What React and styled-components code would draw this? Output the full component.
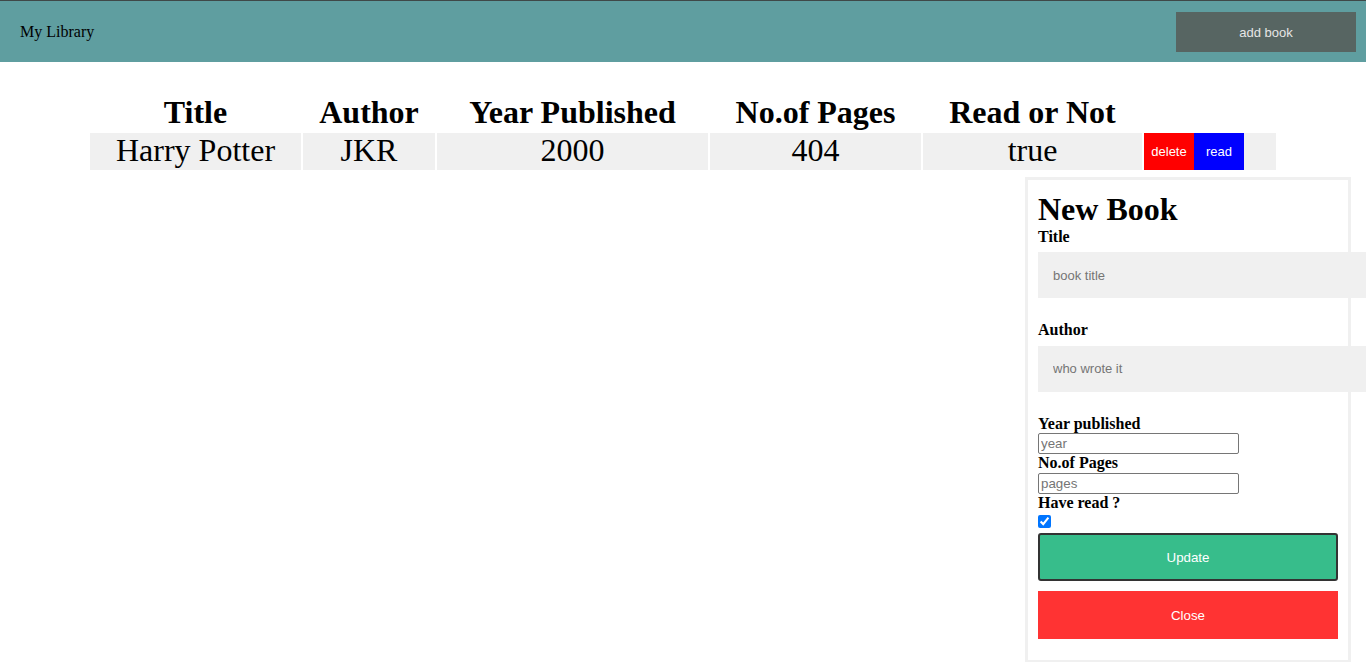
import React from "react";
import styled, { createGlobalStyle } from "styled-components";

const Global = createGlobalStyle`
  html { overflow-x: hidden; }
  body {
    margin: 0;
    font-family: "Liberation Serif", "Times New Roman", serif;
    background: #fff;
    color: #000;
  }
`;

const Header = styled.header`
  display: flex;
  align-items: center;
  justify-content: space-between;
  height: 61px;
  border-top: 1px solid #3f4848;
  background: #5f9ea0;
  padding: 0 10px 0 20px;
`;

const Brand = styled.div`
  font-size: 16px;
  color: #000;
`;

const AddButton = styled.button`
  width: 180px;
  height: 40px;
  border: none;
  padding: 2px 0 0;
  background: #576562;
  color: #e6e6e6;
  font-family: "Liberation Sans", Arial, sans-serif;
  font-size: 13px;
  cursor: pointer;
`;

const Table = styled.table`
  width: 1190px;
  margin: 30px auto 0;
  border-spacing: 2px;
  table-layout: fixed;
`;

const Th = styled.th`
  width: ${(p) => p.$w}px;
  padding: 0;
  font-size: 32px;
  font-weight: bold;
  text-align: center;
  line-height: 37px;
`;

const Td = styled.td`
  padding: 0;
  background: #f0f0f0;
  font-size: 32px;
  text-align: center;
  vertical-align: top;
  line-height: 34px;
  height: 37px;
`;

const ActionCell = styled.td`
  padding: 0;
  background: #f0f0f0;
  height: 37px;
  vertical-align: top;
`;

const Actions = styled.div`
  display: flex;
  height: 37px;
`;

const RowButton = styled.button`
  width: 50px;
  height: 37px;
  border: none;
  padding: 0;
  background: ${(p) => p.$bg};
  color: #fff;
  font-family: "Liberation Sans", Arial, sans-serif;
  font-size: 13px;
`;

const Panel = styled.form`
  width: 300px;
  margin: 5px 15px 0 auto;
  padding: 10px 10px 1px;
  border: 3px solid #f0f0f0;
`;

const PanelTitle = styled.h1`
  margin: 0;
  font-size: 32px;
  line-height: 38px;
  font-weight: bold;
`;

const Label = styled.label`
  display: block;
  font-weight: bold;
  font-size: 16px;
  line-height: 18.4px;
`;

const BigInput = styled.input`
  display: block;
  box-sizing: content-box;
  width: 100%;
  height: 16px;
  margin: 6px 0 23px;
  padding: 15px;
  border: none;
  outline: none;
  background: #f0f0f0;
  font-family: "Liberation Sans", Arial, sans-serif;
  font-size: 13px;
  &::placeholder { color: #757575; }
`;

const SmallInput = styled.input`
  display: block;
  box-sizing: border-box;
  width: 201px;
  height: 21px;
  margin: 0;
  padding: 1px 2px;
  border: 1px solid #767676;
  border-radius: 2px;
  font-family: "Liberation Sans", Arial, sans-serif;
  font-size: 13.33px;
  &::placeholder { color: #757575; }
`;

const Check = styled.input`
  display: block;
  width: 13px;
  height: 13px;
  margin: 3px 0 5px;
`;

const ActionButton = styled.button`
  display: block;
  box-sizing: border-box;
  width: 300px;
  height: 48px;
  margin: 0 0 ${(p) => p.$mb}px;
  border: ${(p) => (p.$outlined ? "2px solid #333" : "none")};
  border-radius: ${(p) => (p.$outlined ? "3px" : "0")};
  background: ${(p) => p.$bg};
  color: #fff;
  font-family: "Liberation Sans", Arial, sans-serif;
  font-size: 13.33px;
`;

const columns = [
  ["Title", 211],
  ["Author", 132],
  ["Year Published", 271],
  ["No.of Pages", 211],
  ["Read or Not", 219],
  ["", 132],
];

export default function App() {
  return (
    <>
      <Global />
      <Header>
        <Brand>My Library</Brand>
        <AddButton>add book</AddButton>
      </Header>
      <Table>
        <thead>
          <tr>
            {columns.map(([t, w], i) => (
              <Th key={i} $w={w}>{t}</Th>
            ))}
          </tr>
        </thead>
        <tbody>
          <tr>
            <Td>Harry Potter</Td>
            <Td>JKR</Td>
            <Td>2000</Td>
            <Td>404</Td>
            <Td>true</Td>
            <ActionCell>
              <Actions>
                <RowButton type="button" $bg="#ff0000">delete</RowButton>
                <RowButton type="button" $bg="#0000ff">read</RowButton>
              </Actions>
            </ActionCell>
          </tr>
        </tbody>
      </Table>
      <Panel onSubmit={(e) => e.preventDefault()}>
        <PanelTitle>New Book</PanelTitle>
        <Label>Title</Label>
        <BigInput placeholder="book title" />
        <Label>Author</Label>
        <BigInput placeholder="who wrote it" />
        <Label>Year published</Label>
        <SmallInput placeholder="year" />
        <Label>No.of Pages</Label>
        <SmallInput placeholder="pages" />
        <Label>Have read ?</Label>
        <Check type="checkbox" defaultChecked />
        <ActionButton type="button" $outlined $bg="#37bd8b" $mb={10}>Update</ActionButton>
        <ActionButton type="button" $bg="#ff3333" $mb={20}>Close</ActionButton>
      </Panel>
    </>
  );
}
